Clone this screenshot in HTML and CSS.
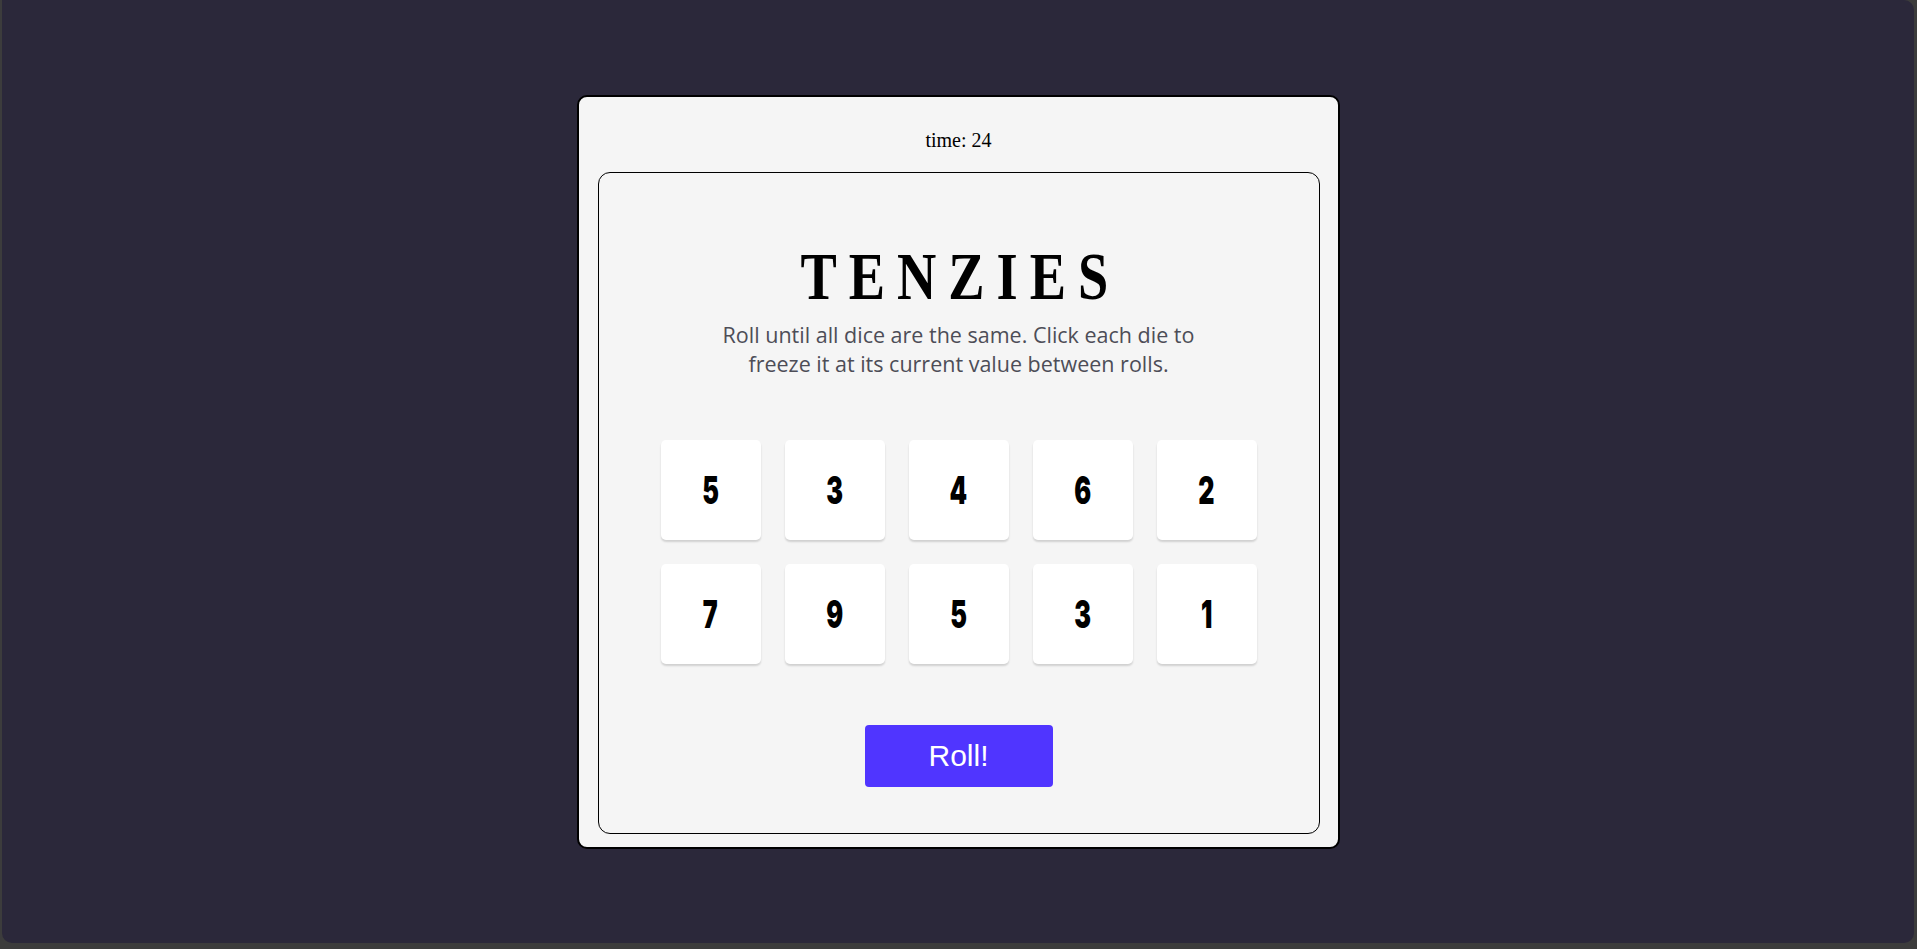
FILE: index.html
```html
<!DOCTYPE html>
<html lang="en">
<head>
<meta charset="utf-8">
<title>Tenzies</title>
<link rel="stylesheet" href="styles.css">
</head>
<body>
<main class="stage">
  <section class="card">
    <div class="time">time: 24</div>
    <div class="board">
      <h1 class="title">TENZIES</h1>
      <p class="instructions">Roll until all dice are the same. Click each die to<br>freeze it at its current value between rolls.</p>
      <div class="dice">
        <button class="die"><span class="face">5</span></button>
        <button class="die"><span class="face">3</span></button>
        <button class="die"><span class="face">4</span></button>
        <button class="die"><span class="face">6</span></button>
        <button class="die"><span class="face">2</span></button>
        <button class="die"><span class="face">7</span></button>
        <button class="die"><span class="face">9</span></button>
        <button class="die"><span class="face">5</span></button>
        <button class="die"><span class="face">3</span></button>
        <button class="die"><span class="face">1</span></button>
      </div>
      <button class="roll">Roll!</button>
    </div>
  </section>
</main>
</body>
</html>
```

FILE: styles.css
```css
html, body {
  margin: 0;
  padding: 0;
}

body {
  height: 949px;
  background: #3c3c3c;
  overflow: hidden;
}

.stage {
  box-sizing: border-box;
  height: 943px;
  margin: 0 3px 0 2px;
  background: #2b283a;
  border-radius: 0 10px 10px 10px;
  display: flex;
  align-items: center;
  justify-content: center;
}

.card {
  box-sizing: border-box;
  width: 763px;
  height: 754px;
  background: #f5f5f5;
  border: 2px solid #000;
  border-radius: 10px;
  padding: 0 18px 13px 19px;
  display: flex;
  flex-direction: column;
}

.time {
  margin: 32px 0 20px;
  font-family: "Liberation Serif", "Times New Roman", serif;
  font-size: 20px;
  line-height: 23px;
  text-align: center;
  color: #000;
}

.board {
  flex: 1;
  border: 1px solid #000;
  border-radius: 12px;
  display: flex;
  flex-direction: column;
  align-items: center;
}

.title {
  margin: 70px 0 0;
  font-family: "Liberation Serif", "Times New Roman", serif;
  font-weight: 700;
  font-size: 68px;
  line-height: 66px;
  letter-spacing: 15px;
  padding-left: 5px;
  color: #000;
  transform: scaleX(0.8);
}

.instructions {
  margin: 11px 0 0;
  font-family: "Open Sans", "DejaVu Sans", sans-serif;
  font-size: 21.5px;
  line-height: 29px;
  text-align: center;
  color: #4d4d57;
}

.dice {
  margin-top: 62px;
  display: grid;
  grid-template-columns: repeat(5, 100px);
  grid-auto-rows: 100px;
  gap: 24px;
}

.die {
  border: none;
  margin: 0;
  padding: 0;
  background: #fff;
  border-radius: 5px;
  box-shadow: 0 2px 2px rgba(0, 0, 0, 0.15);
  display: flex;
  align-items: center;
  justify-content: center;
}

.face {
  display: inline-block;
  font-family: Inter, Roboto, "DejaVu Sans", sans-serif;
  font-weight: 900;
  font-size: 38px;
  line-height: 38px;
  color: #000;
  transform: scaleX(0.66);
}

.roll {
  margin-top: 61px;
  width: 188px;
  height: 62px;
  border: none;
  border-radius: 4px;
  background: #5035ff;
  color: #fff;
  font-family: "Liberation Sans", Arial, sans-serif;
  font-size: 30px;
  padding: 0;
}
```
